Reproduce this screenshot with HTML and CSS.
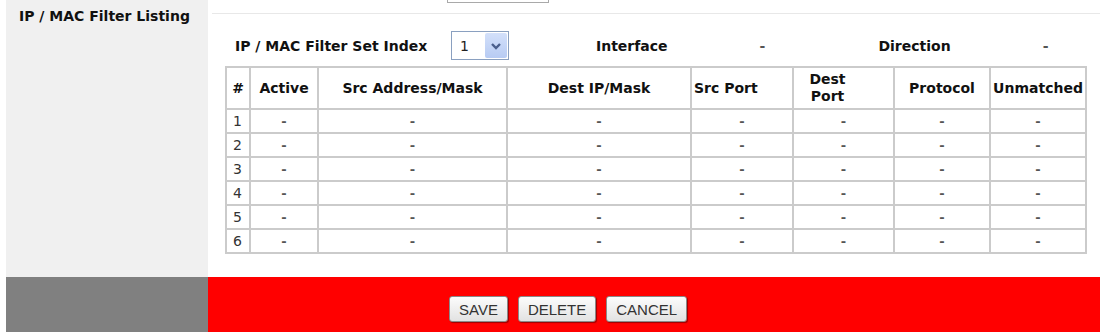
FILE: index.html
```html
<!DOCTYPE html>
<html>
<head>
<meta charset="utf-8">
<title>IP / MAC Filter Listing</title>
<link rel="stylesheet" href="styles.css">
</head>
<body>
<div class="main">
  <div class="sidebar">
    <div class="side-title">IP / MAC Filter Listing</div>
  </div>
  <div class="content">
    <div class="prev-row"><div class="prev-input"></div></div>
    <div class="info-row">
      <span class="info-label">IP / MAC Filter Set Index</span>
      <div class="select">
        <span class="select-value">1</span>
        <span class="select-btn">
          <svg width="12" height="10" viewBox="0 0 12 10"><path d="M2 3 L6 7 L10 3" fill="none" stroke="#4a5f8c" stroke-width="2.4"/></svg>
        </span>
      </div>
      <span class="info-iface">Interface</span>
      <span class="info-dash dash-iface">-</span>
      <span class="info-dir">Direction</span>
      <span class="info-dash dash-dir">-</span>
    </div>
    <table class="grid">
      <colgroup>
        <col class="c-num"><col class="c-act"><col class="c-src"><col class="c-dst"><col class="c-sport"><col class="c-dport"><col class="c-proto"><col class="c-unm">
      </colgroup>
      <thead>
        <tr>
          <th>#</th>
          <th>Active</th>
          <th>Src Address/Mask</th>
          <th>Dest IP/Mask</th>
          <th class="th-left">Src Port</th>
          <th class="th-dport">Dest<br>Port</th>
          <th>Protocol</th>
          <th>Unmatched</th>
        </tr>
      </thead>
      <tbody>
        <tr><td class="num">1</td><td>-</td><td>-</td><td>-</td><td>-</td><td>-</td><td>-</td><td>-</td></tr>
        <tr><td class="num">2</td><td>-</td><td>-</td><td>-</td><td>-</td><td>-</td><td>-</td><td>-</td></tr>
        <tr><td class="num">3</td><td>-</td><td>-</td><td>-</td><td>-</td><td>-</td><td>-</td><td>-</td></tr>
        <tr><td class="num">4</td><td>-</td><td>-</td><td>-</td><td>-</td><td>-</td><td>-</td><td>-</td></tr>
        <tr><td class="num">5</td><td>-</td><td>-</td><td>-</td><td>-</td><td>-</td><td>-</td><td>-</td></tr>
        <tr><td class="num">6</td><td>-</td><td>-</td><td>-</td><td>-</td><td>-</td><td>-</td><td>-</td></tr>
      </tbody>
    </table>
  </div>
</div>
<div class="footer">
  <div class="footer-side"></div>
  <div class="footer-bar">
    <button class="btn">SAVE</button>
    <button class="btn">DELETE</button>
    <button class="btn">CANCEL</button>
  </div>
</div>
</body>
</html>
```

FILE: styles.css
```css
html, body {
  margin: 0;
  padding: 0;
  background: #ffffff;
}
body {
  font-family: "DejaVu Sans", Verdana, sans-serif;
  color: #111111;
  width: 1103px;
  height: 334px;
  overflow: hidden;
}
.main {
  display: flex;
  height: 277px;
}
.sidebar {
  margin-left: 6px;
  width: 202px;
  background: #f0f0f0;
  padding: 8px 0 0 13px;
  box-sizing: border-box;
}
.side-title {
  font-weight: bold;
  font-size: 14px;
  line-height: 16px;
  white-space: nowrap;
}
.content {
  flex: 1;
  display: flex;
  flex-direction: column;
}
.prev-row {
  height: 13px;
  margin: 0 3px 0 4px;
  border-bottom: 1px solid #e8e8e8;
}
.prev-input {
  margin-left: 235px;
  width: 100px;
  height: 2px;
  border: 1px solid #a9a9a9;
  border-top: none;
}
.info-row {
  display: flex;
  align-items: center;
  margin-top: 17px;
  height: 29px;
  padding-left: 27px;
  font-weight: bold;
  font-size: 14px;
}
.info-label {
  width: 216px;
  white-space: nowrap;
}
.select {
  width: 58px;
  height: 29px;
  box-sizing: border-box;
  border: 1px solid #8aa0c0;
  display: flex;
  align-items: stretch;
  background: #fff;
  font-weight: normal;
}
.select-value {
  flex: 1;
  padding-left: 8px;
  display: flex;
  align-items: center;
  font-size: 14px;
  color: #222;
}
.select-btn {
  width: 22px;
  margin: 1px;
  background: linear-gradient(#d3e0fa, #b7cbf3);
  border-radius: 2px;
  display: flex;
  align-items: center;
  justify-content: center;
}
.info-iface {
  margin-left: 87px;
}
.info-dash {
  font-weight: bold;
  color: #555;
}
.dash-iface {
  margin-left: 92px;
}
.info-dir {
  margin-left: 113px;
}
.dash-dir {
  margin-left: 92px;
}
.grid {
  margin-top: 6px;
  margin-left: 17px;
  width: 860px;
  table-layout: fixed;
  border-collapse: collapse;
  font-size: 14px;
}
.c-num { width: 24px; }
.c-act { width: 68px; }
.c-src { width: 189px; }
.c-dst { width: 184px; }
.c-sport { width: 102px; }
.c-dport { width: 101px; }
.c-proto { width: 96px; }
.c-unm { width: 96px; }
.grid th, .grid td {
  border: 2px solid #cbcbcb;
  padding: 0;
  text-align: center;
  vertical-align: middle;
}
.grid th {
  height: 40px;
  font-weight: bold;
  line-height: 17px;
  color: #111111;
  white-space: nowrap;
}
.grid th.th-left {
  text-align: left;
  padding-left: 2px;
}
.grid th.th-dport {
  padding-right: 32px;
}
.grid td {
  height: 22px;
  font-size: 13px;
  font-weight: bold;
  color: #555;
}
.grid td.num {
  text-align: left;
  padding-left: 6px;
  font-size: 14px;
  font-weight: normal;
  color: #333;
}
.footer {
  display: flex;
  height: 55px;
}
.footer-side {
  margin-left: 6px;
  width: 202px;
  background: #808080;
}
.footer-bar {
  width: 892px;
  background: #ff0000;
  display: flex;
  align-items: flex-start;
  gap: 10px;
  padding: 19px 0 0 241px;
  box-sizing: border-box;
}
.btn {
  height: 26px;
  padding: 0 9px;
  font-family: "Liberation Sans", Arial, sans-serif;
  font-size: 15px;
  color: #333333;
  background: linear-gradient(#fcfcfc, #e2e2e2);
  border: 1px solid #8a8a8a;
  border-radius: 3px;
  box-shadow: 1px 1px 1px rgba(90, 0, 0, 0.6);
}
```
